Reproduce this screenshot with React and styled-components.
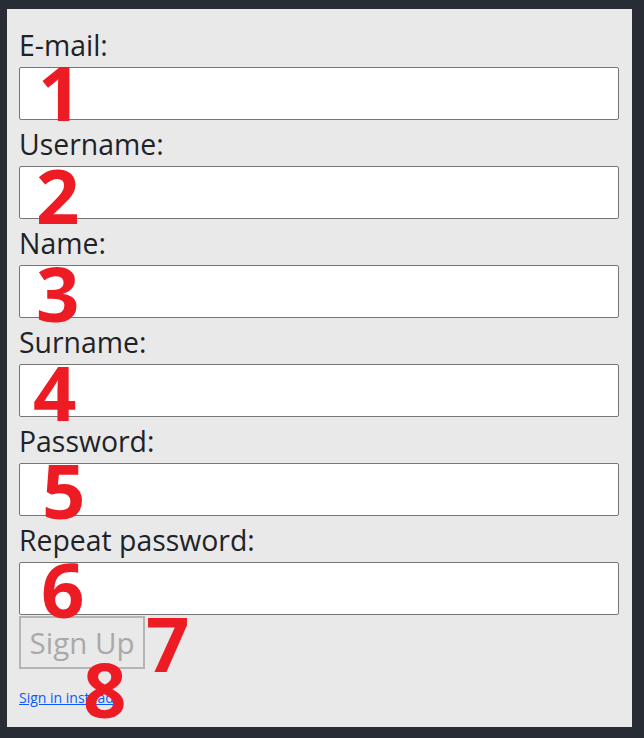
import React from 'react';
import styled, { createGlobalStyle } from 'styled-components';

const GlobalStyle = createGlobalStyle`
  body {
    margin: 0;
    background-color: #282c34;
    font-family: "Open Sans", "Noto Sans", sans-serif;
  }
`;

const Page = styled.div`
  padding: 9px 12px 11px 7px;
`;

const Panel = styled.form`
  position: relative;
  box-sizing: border-box;
  width: 625px;
  height: 718px;
  background-color: #e9e9e9;
  padding: 12px 13px 0 12px;
`;

const Label = styled.label`
  display: block;
  height: 46px;
  line-height: 48px;
  font-size: 28.4px;
  color: #1f2328;
  white-space: nowrap;
`;

const Input = styled.input`
  display: block;
  box-sizing: border-box;
  width: 600px;
  height: 53px;
  margin: 0;
  border: 1px solid #767676;
  border-radius: 2px;
  background: #fff;
  font-size: 26px;
`;

const Button = styled.button`
  display: block;
  box-sizing: border-box;
  width: 126px;
  height: 53px;
  margin: 1px 0 0;
  padding: 0;
  border: 2px solid #b5b5b5;
  background: #e9e9e9;
  color: #a9a9a9;
  font-family: "Open Sans", "Noto Sans", sans-serif;
  font-size: 29.5px;
`;

const SignIn = styled.a`
  display: block;
  margin-top: 19px;
  font-size: 14px;
  color: #0a58ff;
  text-decoration: underline;
`;

const Mark = styled.span`
  position: absolute;
  font-family: "Open Sans", sans-serif;
  font-weight: 700;
  font-size: 76px;
  line-height: 1;
  color: #ed1c24;
`;

const fields = ['E-mail:', 'Username:', 'Name:', 'Surname:', 'Password:', 'Repeat password:'];

const marks = [
  { n: '1', x: 31, y: 45 },
  { n: '2', x: 29, y: 148 },
  { n: '3', x: 29, y: 246 },
  { n: '4', x: 26, y: 345 },
  { n: '5', x: 35, y: 443 },
  { n: '6', x: 34, y: 542 },
  { n: '7', x: 139, y: 596 },
  { n: '8', x: 76, y: 642 },
];

const App = () => {
  return (
    <Page>
      <GlobalStyle />
      <Panel onSubmit={(e) => e.preventDefault()}>
        {fields.map((f, i) => (
          <div key={i}>
            <Label>{f}</Label>
            <Input type={f.includes('assword') ? 'password' : 'text'} />
          </div>
        ))}
        <Button disabled>Sign Up</Button>
        <SignIn href="#">Sign in instead</SignIn>
        {marks.map((m) => (
          <Mark key={m.n} style={{ left: m.x, top: m.y }}>{m.n}</Mark>
        ))}
      </Panel>
    </Page>
  );
};

export default App;
